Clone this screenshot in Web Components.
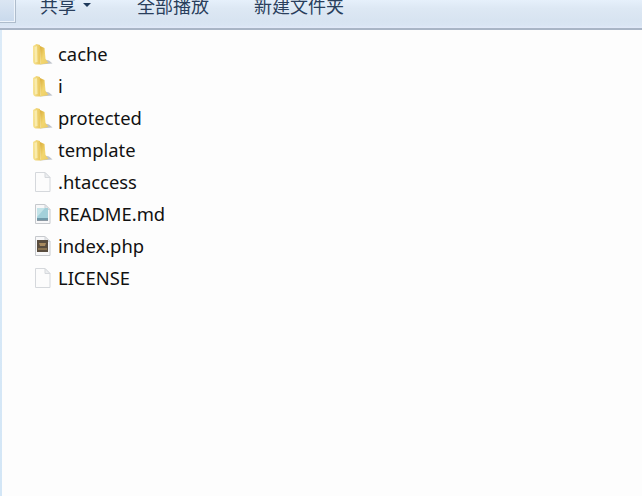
<!DOCTYPE html>
<html>
<head>
<meta charset="utf-8">
<style>
  html, body { margin: 0; height: 100%; background: #fdfdfd; overflow: hidden; }
</style>
</head>
<body>
<explorer-window>
  <tool-bar slot="bar">
    <tool-button menu>共享</tool-button>
    <tool-button>全部播放</tool-button>
    <tool-button>新建文件夹</tool-button>
  </tool-bar>
  <file-row kind="folder">cache</file-row>
  <file-row kind="folder">i</file-row>
  <file-row kind="folder">protected</file-row>
  <file-row kind="folder">template</file-row>
  <file-row kind="blank">.htaccess</file-row>
  <file-row kind="text">README.md</file-row>
  <file-row kind="php">index.php</file-row>
  <file-row kind="blank">LICENSE</file-row>
</explorer-window>

<script>
class ExplorerWindow extends HTMLElement {
  constructor () {
    super();
    this.attachShadow({ mode: "open" });
    this.shadowRoot.innerHTML = `
      <style>
        :host { display: flex; flex-direction: column; height: 496px; width: 642px; }
        .body { flex: 1; display: flex; }
        .edge { width: 2px; background: linear-gradient(#dcebf8, #d3e6f6); }
        .list { flex: 1; display: flex; flex-direction: column; padding: 8px 0 0 29px; background: #fdfdfd; }
      </style>
      <slot name="bar"></slot>
      <div class="body">
        <div class="edge"></div>
        <div class="list"><slot></slot></div>
      </div>
    `;
  }
}

class ToolBar extends HTMLElement {
  constructor () {
    super();
    this.attachShadow({ mode: "open" });
    this.shadowRoot.innerHTML = `
      <style>
        :host {
          display: flex;
          height: 30px;
          flex: none;
          box-sizing: border-box;
          overflow: hidden;
          border-bottom: 2px solid #a9b5c6;
          background: linear-gradient(#e6f0fb 0, #dde8f4 30%, #d8e4f1 70%, #d9e5f3 90%, #e1e9f8 100%);
        }
        .nav {
          flex: none;
          width: 16px;
          height: 23px;
          box-sizing: border-box;
          border-right: 1px solid #aebccc;
          border-bottom: 1px solid #aebccc;
          box-shadow: inset -1px -1px 0 #eef4fb;
          background: linear-gradient(#dbe6f3, #c9d9ec);
        }
        .items { display: flex; margin-left: 24px; margin-top: -7px; }
      </style>
      <div class="nav"></div>
      <div class="items"><slot></slot></div>
    `;
  }
}

class ToolButton extends HTMLElement {
  constructor () {
    super();
    this.attachShadow({ mode: "open" });
    this.shadowRoot.innerHTML = `
      <style>
        :host {
          display: flex;
          align-items: center;
          gap: 7px;
          height: 24px;
          margin-right: 45px;
          font: 18px/24px "Noto Sans CJK SC", "Liberation Sans", sans-serif;
          color: #2a3f5c;
          white-space: nowrap;
        }
        .arrow { display: none; width: 0; height: 0; border: 4px solid transparent; border-top: 4px solid #1e395b; border-bottom: 0; margin-right: 1px; }
        :host([menu]) .arrow { display: block; }
      </style>
      <slot></slot><span class="arrow"></span>
    `;
  }
}

const SHEET = `
    <path d="M4.5 1.5 H14 L19 6.5 V20.5 H4.5 Z" fill="#f8f8f9" stroke="#c6c9cd"/>
    <path d="M14 1.5 V6.5 H19 Z" fill="#e6e8ea" stroke="#cfd2d6"/>`;

const ICONS = {
  folder: `
    <defs>
      <linearGradient id="back" x1="0" x2="1" y1="0" y2="0">
        <stop offset="0" stop-color="#f8e596"/><stop offset="1" stop-color="#e8c558"/>
      </linearGradient>
      <linearGradient id="front" x1="0" x2="1" y1="0" y2="1">
        <stop offset="0" stop-color="#d9ac38"/><stop offset=".5" stop-color="#f2d670"/><stop offset="1" stop-color="#edcb62"/>
      </linearGradient>
    </defs>
    <path d="M9 21.5 L21.5 20.5 L18 17.5 L12 16 Z" fill="#aab0b9" opacity=".75"/>
    <path d="M2 3 L5.5 1 L9 2 L9.5 21.5 L4.5 21.5 C2.8 21 2 20 2 18 Z" fill="url(#back)"/>
    <path d="M9 3 L13.5 5 L14.5 16 L17.5 20 L9.5 21.5 Z" fill="url(#front)"/>
    <path d="M3.5 4 L6 3 L6.5 19 L4 19.5 Z" fill="#fbf0b8" opacity=".8"/>`,
  blank: `
    <path d="M4.5 1.5 H14 L19 6.5 V20.5 H4.5 Z" fill="#fcfcfc" stroke="#d5d8dc"/>
    <path d="M14 1.5 V6.5 H19 Z" fill="#eceef0" stroke="#d5d8dc"/>`,
  text: SHEET + `
    <rect x="6" y="5" width="11" height="12" fill="#a3d0da"/>
    <path d="M6 5 H14 L6 14 Z" fill="#c3e3e8"/>
    <rect x="6" y="15" width="11" height="2" fill="#6f98a8"/>
    <rect x="6" y="17" width="11" height="1" fill="#8d99a3"/>`,
  php: SHEET + `
    <rect x="6" y="5" width="11" height="12" fill="#5a4d3e"/>
    <path d="M8 8 H15 L14 11 H9 Z" fill="#a98b5f"/>
    <rect x="7" y="13" width="9" height="2" fill="#8a7350"/>`
};

class FileRow extends HTMLElement {
  constructor () {
    super();
    this.attachShadow({ mode: "open" });
    const kind = this.getAttribute("kind");
    this.shadowRoot.innerHTML = `
      <style>
        :host {
          display: flex;
          align-items: center;
          gap: 5px;
          height: 32px;
          font: 18.4px/32px "Noto Sans", "Open Sans", sans-serif;
          color: #111;
        }
        svg { width: 22px; height: 22px; flex: none; filter: blur(.35px); }
      </style>
      <svg viewBox="0 0 22 22">${ICONS[kind]}</svg>
      <slot></slot>
    `;
  }
}

customElements.define('explorer-window', ExplorerWindow);
customElements.define('tool-bar', ToolBar);
customElements.define('tool-button', ToolButton);
customElements.define('file-row', FileRow);
</script>
</body>
</html>
